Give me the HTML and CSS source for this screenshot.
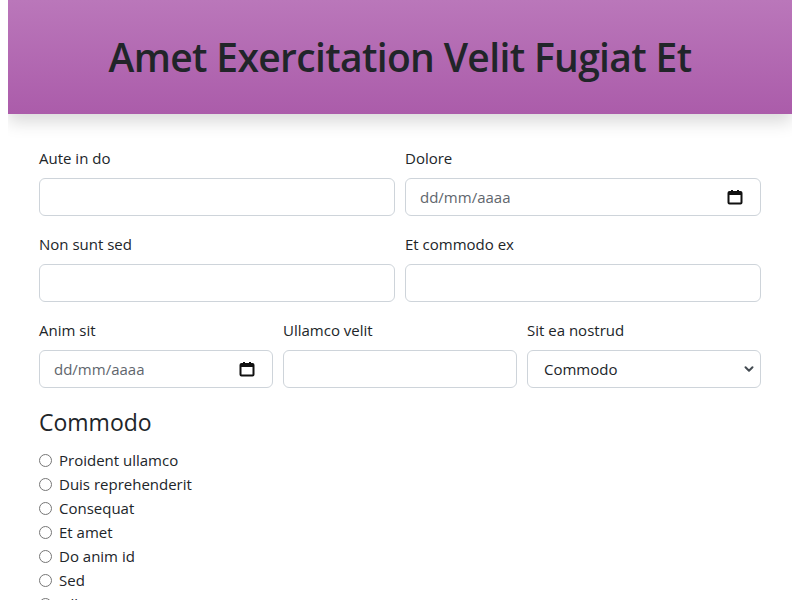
FILE: index.html
```html
<!DOCTYPE html>
<html lang="es">
<head>
<meta charset="utf-8">
<title>Amet Exercitation Velit Fugiat Et</title>
<link rel="stylesheet" href="styles.css">
</head>
<body>
<header class="banner">
  <h1 class="banner-title">Amet Exercitation Velit Fugiat Et</h1>
</header>
<main class="form-wrap">
  <div class="row row-2">
    <div class="field">
      <label class="field-label">Aute in do</label>
      <input class="control" type="text">
    </div>
    <div class="field">
      <label class="field-label">Dolore</label>
      <div class="control date-control">
        <span class="date-text">dd/mm/aaaa</span>
        <svg class="cal-icon" width="16" height="16" viewBox="0 0 16 16"><rect x="1.5" y="3" width="13" height="11.5" rx="1" fill="none" stroke="#111" stroke-width="2"/><rect x="1.5" y="3" width="13" height="3" fill="#111"/><rect x="4" y="1" width="2" height="3" fill="#111"/><rect x="10" y="1" width="2" height="3" fill="#111"/></svg>
      </div>
    </div>
  </div>
  <div class="row row-2">
    <div class="field">
      <label class="field-label">Non sunt sed</label>
      <input class="control" type="text">
    </div>
    <div class="field">
      <label class="field-label">Et commodo ex</label>
      <input class="control" type="text">
    </div>
  </div>
  <div class="row row-3">
    <div class="field">
      <label class="field-label">Anim sit</label>
      <div class="control date-control">
        <span class="date-text">dd/mm/aaaa</span>
        <svg class="cal-icon" width="16" height="16" viewBox="0 0 16 16"><rect x="1.5" y="3" width="13" height="11.5" rx="1" fill="none" stroke="#111" stroke-width="2"/><rect x="1.5" y="3" width="13" height="3" fill="#111"/><rect x="4" y="1" width="2" height="3" fill="#111"/><rect x="10" y="1" width="2" height="3" fill="#111"/></svg>
      </div>
    </div>
    <div class="field">
      <label class="field-label">Ullamco velit</label>
      <input class="control" type="text">
    </div>
    <div class="field">
      <label class="field-label">Sit ea nostrud</label>
      <select class="control select-control">
        <option>Commodo</option>
      </select>
    </div>
  </div>
  <section class="choices">
    <h4 class="choices-title">Commodo</h4>
    <label class="radio"><input type="radio" name="c"> Proident ullamco</label>
    <label class="radio"><input type="radio" name="c"> Duis reprehenderit</label>
    <label class="radio"><input type="radio" name="c"> Consequat</label>
    <label class="radio"><input type="radio" name="c"> Et amet</label>
    <label class="radio"><input type="radio" name="c"> Do anim id</label>
    <label class="radio"><input type="radio" name="c"> Sed</label>
    <label class="radio"><input type="radio" name="c"> Fillum</label>
  </section>
</main>
</body>
</html>
```
FILE: styles.css
```css
html, body {
  height: 100%;
}
body {
  margin: 0 8px;
  font-family: "Open Sans", "Noto Sans", sans-serif;
  font-size: 15px;
  line-height: 24px;
  color: #212529;
  background: #fff;
  overflow: hidden;
}
.banner {
  height: 114px;
  background: linear-gradient(#ba77ba, #ab5caa);
  box-shadow: 0 8px 16px rgba(0, 0, 0, 0.15);
  display: flex;
  align-items: center;
  justify-content: center;
}
.banner-title {
  margin: 0;
  font-size: 39px;
  font-weight: 600;
  line-height: 48px;
  color: #212529;
  letter-spacing: -0.65px;
}
.form-wrap {
  padding: 32px 31px 0;
}
.row {
  display: grid;
  gap: 10px;
  margin-bottom: 16px;
}
.row-2 { grid-template-columns: 1fr 1fr; }
.row-3 { grid-template-columns: 1fr 1fr 1fr; }
.field {
  display: flex;
  flex-direction: column;
}
.field-label {
  display: block;
  margin-bottom: 8px;
  line-height: 24px;
}
.control {
  box-sizing: border-box;
  width: 100%;
  height: 38px;
  margin: 0;
  padding: 6px 12px;
  border: 1px solid #ced4da;
  border-radius: 6px;
  background: #fff;
  font: inherit;
  color: #212529;
  outline: none;
}
.date-control {
  display: flex;
  align-items: center;
  justify-content: space-between;
  padding: 0 17px 0 14px;
}
.date-text {
  color: #5f666d;
}
.cal-icon {
  display: block;
}
.select-control {
  appearance: none;
  -webkit-appearance: none;
  padding-left: 16px;
  background-image: url("data:image/svg+xml,%3csvg xmlns='http://www.w3.org/2000/svg' viewBox='0 0 10 10'%3e%3cpath fill='none' stroke='%23444b52' stroke-linecap='round' stroke-linejoin='round' stroke-width='2' d='M1.5 3.2 5 6.7 8.5 3.2'/%3e%3c/svg%3e");
  background-repeat: no-repeat;
  background-position: right 6px center;
  background-size: 10px 10px;
}
.choices {
  padding-top: 4px;
}
.choices-title {
  margin: 0 0 11px;
  font-size: 23px;
  font-weight: 400;
  line-height: 29px;
}
.radio {
  display: flex;
  align-items: center;
  line-height: 24px;
}
.radio input {
  width: 13px;
  height: 13px;
  margin: 0 7px 0 0;
}
```
